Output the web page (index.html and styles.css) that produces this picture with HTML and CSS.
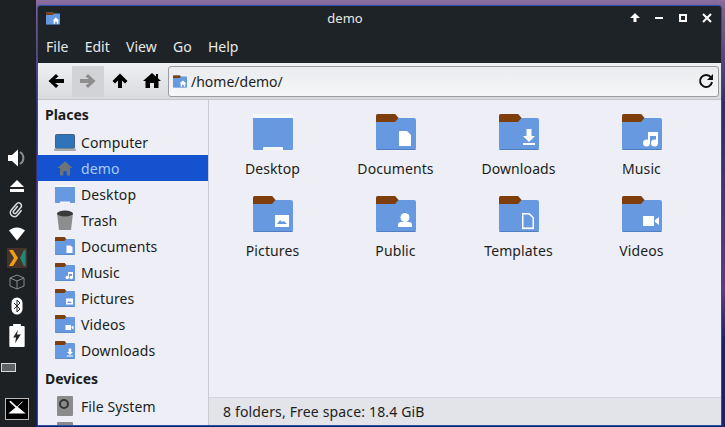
FILE: index.html
```html
<!DOCTYPE html>
<html lang="en">
<head>
    <meta charset="UTF-8">
    <title>demo</title>
    <link rel="stylesheet" href="styles.css">
</head>
<body>
    <svg class="defs" width="0" height="0">
        <symbol id="folder" viewBox="0 0 40 36">
            <path d="M0 2a2 2 0 0 1 2-2h17l3.500 4H38a2 2 0 0 1 2 2v28a2 2 0 0 1-2 2H2a2 2 0 0 1-2-2z" fill="#6699e0"/>
            <path d="M0 2a2 2 0 0 1 2-2h17l3.500 4-3.500 4H0z" fill="#7f3f0c"/>
            <path d="M0 35h40a2 2 0 0 1-2 1H2a2 2 0 0 1-2-1z" fill="#4f7fc0"/>
        </symbol>
        <symbol id="f-desktop" viewBox="0 0 40 36">
            <rect width="40" height="36" rx="1.500" fill="#6699e0"/>
            <rect width="40" height="4" fill="#f6f7fb"/>
            <path d="M10 36v-2a1 1 0 0 1 1-1h18a1 1 0 0 1 1 1v2z" fill="#f6f7fb"/>
        </symbol>
        <symbol id="f-home" viewBox="0 0 40 36">
            <use href="#folder" width="40" height="36"/>
            <path d="M28 15l10 9h-3v9h-4v-6h-5v6h-4v-9h-3z" fill="#fff"/>
        </symbol>
        <symbol id="f-docs" viewBox="0 0 40 36">
            <use href="#folder" width="40" height="36"/>
            <path d="M23 17h8l4 4v11H23z" fill="#fff"/>
        </symbol>
        <symbol id="f-down" viewBox="0 0 40 36">
            <use href="#folder" width="40" height="36"/>
            <path d="M27.500 15h5v7h3.500l-6 6-6-6h3.500zM24 29h12v2H24z" fill="#fff"/>
        </symbol>
        <symbol id="f-music" viewBox="0 0 40 36">
            <use href="#folder" width="40" height="36"/>
            <path d="M26 18h10v11h-2v-7h-6v7h-2z" fill="#fff"/>
            <circle cx="24.500" cy="29" r="3.500" fill="#fff"/>
            <circle cx="32.500" cy="29" r="3.500" fill="#fff"/>
        </symbol>
        <symbol id="f-pics" viewBox="0 0 40 36">
            <use href="#folder" width="40" height="36"/>
            <rect x="22" y="19" width="14" height="12" fill="#fff"/>
            <path d="M24 28l3-4 2 2 2-1 3 3z" fill="#6699e0"/>
        </symbol>
        <symbol id="f-public" viewBox="0 0 40 36">
            <use href="#folder" width="40" height="36"/>
            <circle cx="29" cy="21.500" r="4.500" fill="#fff"/>
            <path d="M22 31v-2a3 3 0 0 1 3-3h8a3 3 0 0 1 3 3v2z" fill="#fff"/>
        </symbol>
        <symbol id="f-temp" viewBox="0 0 40 36">
            <use href="#folder" width="40" height="36"/>
            <path d="M23.750 17.750h6.500l4 4v10.500h-10.500z" fill="none" stroke="#fff" stroke-width="1.500"/>
            <path d="M23 32.500h12" stroke="#fff" stroke-width="1.500" stroke-dasharray="1 1"/>
        </symbol>
        <symbol id="f-video" viewBox="0 0 40 36">
            <use href="#folder" width="40" height="36"/>
            <rect x="21" y="20" width="11" height="10" fill="#fff"/>
            <path d="M33 24l4-3v8l-4-3z" fill="#fff"/>
        </symbol>
    </svg>

    <!-- Left panel -->
    <aside class="panel">
        <div class="tray">
            <svg class="tray-icon tray-sound" viewBox="0 0 18 18"><path d="M0 6h4l6-5.500v17L4 12H0z" fill="#fff"/><path d="M12 3a7 7 0 0 1 0 12" fill="none" stroke="#8a8d8f" stroke-width="2"/></svg>
            <svg class="tray-icon" viewBox="0 0 18 18"><path d="M9 3l7 7H2z" fill="#fff"/><rect x="2" y="12" width="14" height="3" fill="#fff"/></svg>
            <svg class="tray-icon" viewBox="0 0 18 18"><path transform="rotate(40 9 9) translate(1.500 1.500) scale(.8)" d="M7 5v8a2 2 0 0 0 4 0V4a3.500 3.500 0 0 0-7 0v10a5 5 0 0 0 10 0V6" fill="none" stroke="#d8d8d8" stroke-width="2"/></svg>
            <svg class="tray-icon" viewBox="0 0 18 18"><path d="M1 5.500c5-4 11-4 16 0L9 15.500z" fill="#fff"/></svg>
            <svg class="tray-logo" viewBox="0 0 20 20"><rect width="20" height="20" fill="#46342c"/><path d="M2 2h4l5 8-5 8H2l5-8z" fill="#f0a010"/><path d="M17 2l-4 8 4 8h1.500V2z" fill="#1c8a78"/></svg>
            <svg class="tray-icon" viewBox="0 0 18 18"><path d="M9 8l7-3-7-3-7 3zM2 5v8l7 3 7-3V5M9 8v8" fill="none" stroke="#8a8d8f"/></svg>
            <svg class="tray-icon" viewBox="0 0 18 18"><rect x="3.500" y="0.500" width="11" height="17" rx="5.500" fill="#fff"/><path d="M6 6l6 6-3 3V3l3 3-6 6" fill="none" stroke="#1f2326"/></svg>
            <svg class="tray-batt" viewBox="0 0 16 24"><path d="M4 0h8v2h3a1 1 0 0 1 1 1v20a1 1 0 0 1-1 1H1a1 1 0 0 1-1-1V3a1 1 0 0 1 1-1h3z" fill="#fff"/><path d="M9 6l-5 8h3l-1 6 6-9H8z" fill="#1f2326"/></svg>
        </div>
        <div class="pager"></div>
        <div class="start">
            <svg viewBox="0 0 24 22" width="24" height="22"><path d="M5 2l13 12-1.500 1L3.500 3z" fill="#fff"/><path d="M18 3l-6 6" stroke="#fff"/><path d="M12 8l9.500 8h-19z" fill="#fff"/></svg>
        </div>
    </aside>

    <!-- File manager window -->
    <main class="window">
        <header class="titlebar">
            <svg class="title-icon" width="14" height="13"><use href="#f-home"/></svg>
            <span class="title">demo</span>
            <div class="win-buttons">
                <svg viewBox="0 0 10 10" width="10" height="10"><path d="M5 0l5 5H6.500v4h-3V5H0z" fill="#fff"/></svg>
                <svg viewBox="0 0 10 10" width="10" height="10"><rect x="1" y="4" width="8" height="2" fill="#fff"/></svg>
                <svg viewBox="0 0 10 10" width="10" height="10"><path d="M1 1h8v8H1zM3 3v4h4V3z" fill="#fff" fill-rule="evenodd"/></svg>
                <svg viewBox="0 0 10 10" width="10" height="10"><path d="M1 1l8 8M9 1L1 9" stroke="#fff" stroke-width="2"/></svg>
            </div>
        </header>
        <nav class="menubar">
            <span>File</span><span>Edit</span><span>View</span><span>Go</span><span>Help</span>
        </nav>
        <div class="toolbar">
            <button class="tool"><svg viewBox="0 0 18 18" width="18" height="18"><path d="M9 2l2.500 2.500L8 7h9v4H8l3.500 2.500L9 16 1.500 9z" fill="#000"/></svg></button>
            <button class="tool tool-off"><svg viewBox="0 0 18 18" width="18" height="18"><path d="M9 2L6.500 4.500 10 7H1v4h9l-3.500 2.500L9 16l7.500-7z" fill="#8e8e8e"/></svg></button>
            <button class="tool"><svg viewBox="0 0 18 18" width="18" height="18"><path d="M9 1.500L16.500 9 14 11.500l-3-3V16H7V8.500l-3 3L1.500 9z" fill="#000"/></svg></button>
            <button class="tool"><svg viewBox="0 0 18 18" width="18" height="18"><path d="M9 1l4 3.500V2h2v4.300L18 9h-2.500v7H11v-5H7v5H2.500V9H0z" fill="#000"/></svg></button>
            <div class="location">
                <svg width="14" height="13"><use href="#f-home"/></svg>
                <span class="path">/home/demo/</span>
                <svg class="reload" viewBox="0 0 16 16" width="16" height="16"><path d="M13 4.500A6 6 0 1 0 14 9" fill="none" stroke="#111" stroke-width="2"/><path d="M15 1v6H9z" fill="#111"/></svg>
            </div>
        </div>
        <div class="content">
            <section class="sidebar">
                <h3>Places</h3>
                <div class="place"><svg class="p-icon p-wide" viewBox="0 0 22 17"><rect x="1.500" y=".5" width="19" height="14" rx="1" fill="#2d74b8" stroke="#45607a"/><rect y="14.500" width="22" height="2.500" rx="1" fill="#a8aaae"/></svg>Computer</div>
                <div class="place active"><svg class="p-icon" viewBox="0 0 24 20"><path d="M12 2l9 8h-3v9h-4v-5h-4v5H6v-9H3z" fill="#6e7378"/></svg>demo</div>
                <div class="place"><svg class="p-icon"><use href="#f-desktop"/></svg>Desktop</div>
                <div class="place"><svg class="p-icon p-tall" viewBox="0 0 20 20"><path d="M2 3h16l-2 17H4z" fill="#8c8d8d"/><ellipse cx="10" cy="3.500" rx="8" ry="3" fill="#3a3a3a"/></svg>Trash</div>
                <div class="place"><svg class="p-icon"><use href="#f-docs"/></svg>Documents</div>
                <div class="place"><svg class="p-icon"><use href="#f-music"/></svg>Music</div>
                <div class="place"><svg class="p-icon"><use href="#f-pics"/></svg>Pictures</div>
                <div class="place"><svg class="p-icon"><use href="#f-video"/></svg>Videos</div>
                <div class="place"><svg class="p-icon"><use href="#f-down"/></svg>Downloads</div>
                <h3 class="devices">Devices</h3>
                <div class="place"><svg class="p-icon p-tall" viewBox="0 0 20 20"><rect x="2" width="16" height="20" rx="1" fill="#8b8b8b"/><circle cx="9" cy="8" r="4" fill="none" stroke="#333" stroke-width="2"/></svg>File System</div>
                <div class="place"><svg class="p-icon p-tall" viewBox="0 0 20 20"><rect x="2" width="16" height="20" rx="1" fill="#8b8b8b"/></svg></div>
            </section>
            <section class="main-pane">
                <div class="grid">
                    <div class="item"><svg width="40" height="36"><use href="#f-desktop"/></svg><span>Desktop</span></div>
                    <div class="item"><svg width="40" height="36"><use href="#f-docs"/></svg><span>Documents</span></div>
                    <div class="item"><svg width="40" height="36"><use href="#f-down"/></svg><span>Downloads</span></div>
                    <div class="item"><svg width="40" height="36"><use href="#f-music"/></svg><span>Music</span></div>
                    <div class="item"><svg width="40" height="36"><use href="#f-pics"/></svg><span>Pictures</span></div>
                    <div class="item"><svg width="40" height="36"><use href="#f-public"/></svg><span>Public</span></div>
                    <div class="item"><svg width="40" height="36"><use href="#f-temp"/></svg><span>Templates</span></div>
                    <div class="item"><svg width="40" height="36"><use href="#f-video"/></svg><span>Videos</span></div>
                </div>
                <footer class="status">8 folders, Free space: 18.4 GiB</footer>
            </section>
        </div>
    </main>
</body>
</html>
```

FILE: styles.css
```css
html, body {
    height: 100%;
}

body {
    margin: 0;
    display: flex;
    overflow: hidden;
    background: linear-gradient(180deg, #8a6f9f 0, #7a6298 2%, #2a2e6e 25%, #5c3a86 68%, #14246a 80%, #14246a 100%);
    font-family: 'Noto Sans', sans-serif;
    font-size: 14px;
    color: #1b1d20;
}

.defs {
    position: absolute;
}

.panel {
    width: 36px;
    flex: none;
    background: #1d2124;
    display: flex;
    flex-direction: column;
    align-items: center;
    padding-top: 149px;
    box-sizing: border-box;
}

.tray {
    display: flex;
    flex-direction: column;
    align-items: center;
    gap: 6px;
    margin-right: 2px;
}

.tray-icon {
    width: 18px;
    height: 18px;
}

.tray-sound {
    margin-bottom: 4px;
}

.tray-logo {
    width: 20px;
    height: 20px;
    margin: -1px 0;
}

.tray-batt {
    width: 16px;
    height: 23px;
    margin-top: 3px;
}

.pager {
    width: 13px;
    height: 7px;
    margin-top: 16px;
    align-self: flex-start;
    margin-left: 1px;
    background: #5d6266;
    border: 1px solid #d8d8d8;
}

.start {
    margin-top: 26px;
    margin-right: 2px;
    width: 22px;
    height: 20px;
    background: #000;
    border: 1px solid #bbb;
    display: flex;
    align-items: center;
    justify-content: center;
}

.window {
    width: 685px;
    height: 421px;
    margin: 5px 0 0 1px;
    display: flex;
    flex-direction: column;
    border: 1px solid #2a4fa8;
    box-sizing: border-box;
    border-radius: 3px 3px 0 0;
    overflow: hidden;
}

.titlebar {
    height: 24px;
    background: #1d2326;
    color: #e8e8e8;
    display: flex;
    align-items: center;
    padding-left: 8px;
    font-size: 13px;
}

.title {
    flex: 1;
    text-align: center;
}

.win-buttons {
    display: flex;
    gap: 14px;
    padding-right: 9px;
}

.menubar {
    height: 33px;
    background: #1d2326;
    color: #e8e8e8;
    display: flex;
    align-items: center;
    gap: 16.3px;
    padding-left: 8px;
}

.toolbar {
    height: 36px;
    background: linear-gradient(#eef0f4, #d8dade);
    border-bottom: 1px solid #c4c6ca;
    display: flex;
    align-items: center;
    padding-left: 2px;
}

.tool {
    width: 32px;
    height: 31px;
    padding: 0;
    border: none;
    background: none;
    display: flex;
    align-items: center;
    justify-content: center;
}

.tool-off {
    background: #d2d3d6;
}

.location {
    flex: 1;
    height: 31px;
    margin-right: 2px;
    box-sizing: border-box;
    background: linear-gradient(#e9ebee, #f6f7f9);
    border: 1px solid #9a9c9e;
    border-radius: 3px;
    display: flex;
    align-items: center;
    padding: 0 4px;
    gap: 4px;
}

.path {
    flex: 1;
}

.content {
    flex: 1;
    display: flex;
    background: #eeeff6;
    min-height: 0;
}

.sidebar {
    width: 170px;
    flex: none;
    border-right: 1px solid #c9cacf;
    overflow: hidden;
}

.sidebar h3 {
    margin: 0;
    height: 29px;
    line-height: 29px;
    padding-left: 7px;
    font-size: 14px;
    font-weight: 700;
}

.sidebar .devices {
    height: 30px;
    line-height: 32px;
}

.place {
    height: 26px;
    display: flex;
    align-items: center;
    gap: 6px;
    padding-left: 17px;
    letter-spacing: .1px;
}

.p-icon {
    width: 20px;
    height: 18px;
    flex: none;
}

.p-wide {
    width: 22px;
    height: 17px;
    margin: 0 -1px;
}

.p-tall {
    height: 20px;
}

.place.active {
    background: #1552cf;
    color: #a8ccf8;
}

.main-pane {
    flex: 1;
    display: flex;
    flex-direction: column;
    min-width: 0;
}

.grid {
    flex: 1;
    display: grid;
    grid-template-columns: repeat(4, 123px);
    grid-auto-rows: 82px;
    padding: 14px 0 0 2px;
}

.item {
    display: flex;
    flex-direction: column;
    align-items: center;
    gap: 9px;
}

.item span {
    line-height: 20px;
    letter-spacing: .1px;
}

.status {
    height: 27px;
    border-top: 1px solid #d2d3d8;
    background: #e3e4ea;
    padding-left: 14px;
    line-height: 27px;
    letter-spacing: .16px;
}
```
